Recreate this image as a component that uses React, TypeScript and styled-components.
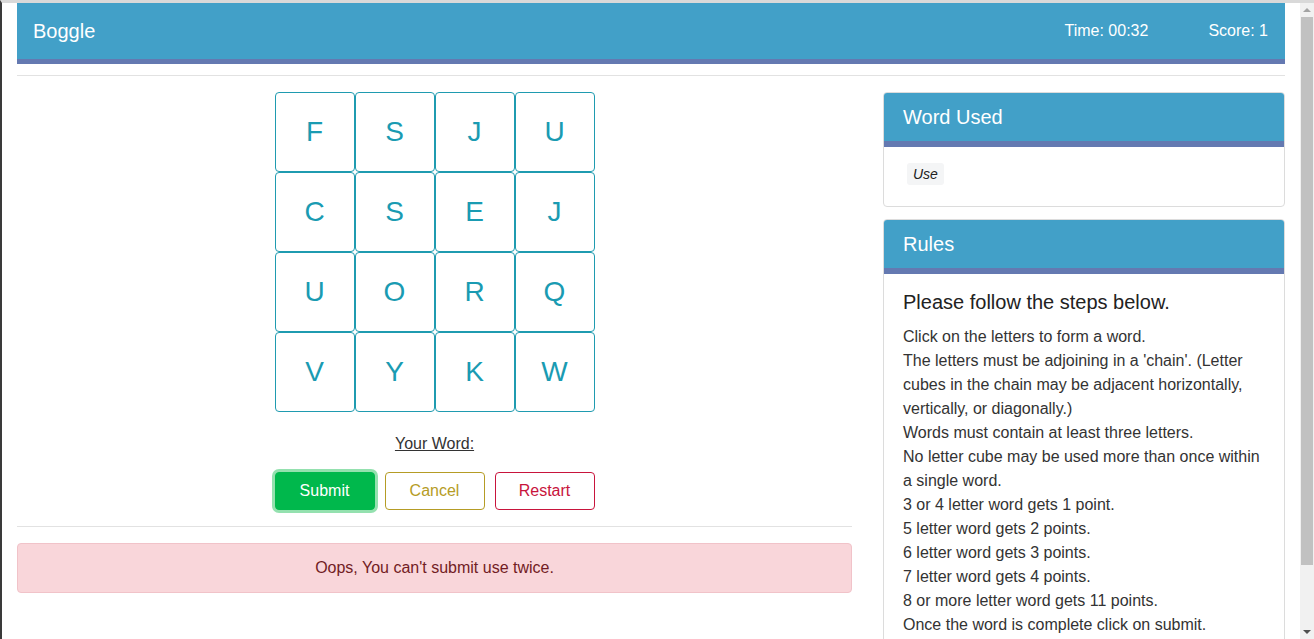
import React from "react";
import styled, { createGlobalStyle } from "styled-components";

const Global = createGlobalStyle`
  html, body { margin: 0; padding: 0; }
  body {
    font-family: "Liberation Sans", Arial, sans-serif;
    color: #333;
    background: #fff;
    border-top: 3px solid #d9d9d9;
    border-left: 2px solid #3a3a3a;
  }
  * { box-sizing: border-box; }
`;

const Page = styled.div`
  padding: 0 29px 40px 15px;
`;

const ScrollTrack = styled.div`
  position: fixed;
  top: 3px;
  right: 0;
  bottom: 0;
  width: 14px;
  background: #f1f1f1;
  display: flex;
  flex-direction: column;
  align-items: center;
`;

const ScrollArrow = styled.div<{ $down?: boolean }>`
  width: 0;
  height: 0;
  margin: 5px 0;
  border-left: 4px solid transparent;
  border-right: 4px solid transparent;
  ${(p) => (p.$down ? "border-top: 4px solid #505050;" : "border-bottom: 4px solid #a3a3a3;")}
`;

const ScrollThumb = styled.div`
  width: 12px;
  flex: 1;
  margin-bottom: 60px;
  background: #c1c1c1;
`;

const TopBar = styled.header`
  display: flex;
  align-items: center;
  justify-content: space-between;
  height: 61px;
  padding: 0 17px 0 16px;
  background: #42a0c8;
  border-bottom: 5px solid #6479b1;
  color: #fff;
`;

const Brand = styled.div`
  font-size: 20px;
`;

const Stats = styled.div`
  display: flex;
  gap: 60px;
  font-size: 16px;
`;

const Rule = styled.hr`
  border: 0;
  border-top: 1px solid #e2e2e2;
  margin: 11px 0 16px;
`;

const Columns = styled.div`
  display: grid;
  grid-template-columns: 835px 402px;
  gap: 31px;
  align-items: start;
`;

const GameColumn = styled.section`
  display: flex;
  flex-direction: column;
  align-items: center;
`;

const Board = styled.div`
  display: grid;
  grid-template-columns: repeat(4, 80px);
  grid-auto-rows: 80px;
`;

const Cell = styled.button`
  border: 1px solid #1f9bb0;
  border-radius: 4px;
  background: #fff;
  color: #1a9bb2;
  font-family: "Liberation Sans", Arial, sans-serif;
  font-size: 28px;
  display: flex;
  align-items: center;
  justify-content: center;
  padding: 0;
  cursor: pointer;
`;

const WordLabel = styled.div`
  margin-top: 23px;
  font-size: 16px;
  line-height: 18px;
  text-decoration: underline;
  color: #333;
`;

const Actions = styled.div`
  display: flex;
  gap: 10px;
  margin-top: 19px;
`;

const ActionButton = styled.button<{ $tone: string; $filled?: boolean }>`
  width: 100px;
  height: 38px;
  border-radius: 4px;
  font-family: "Liberation Sans", Arial, sans-serif;
  font-size: 16px;
  border: 1px solid ${(p) => p.$tone};
  background: ${(p) => (p.$filled ? p.$tone : "#fff")};
  color: ${(p) => (p.$filled ? "#fff" : p.$tone)};
  box-shadow: ${(p) => (p.$filled ? "0 0 0 3px rgba(60, 200, 110, 0.55)" : "none")};
  cursor: pointer;
`;

const FullRule = styled.hr`
  align-self: stretch;
  border: 0;
  border-top: 1px solid #e2e2e2;
  margin: 16px 0 16px;
`;

const Alert = styled.div`
  align-self: stretch;
  background: #f9d6da;
  border: 1px solid #f1c3c9;
  border-radius: 4px;
  color: #721c24;
  text-align: center;
  padding: 12px 20px;
  font-size: 16px;
  line-height: 24px;
`;

const Side = styled.aside`
  display: flex;
  flex-direction: column;
  gap: 12px;
`;

const Panel = styled.div`
  border: 1px solid #dcdcdc;
  border-radius: 4px;
  overflow: hidden;
`;

const PanelHead = styled.div`
  background: #42a0c8;
  border-bottom: 6px solid #6479b1;
  color: #fff;
  font-size: 20px;
  height: 54px;
  padding: 0 19px;
  display: flex;
  align-items: center;
`;

const WordsBody = styled.div`
  padding: 16px 20px 21px 23px;
  display: flex;
  gap: 6px;
`;

const Chip = styled.span`
  background: #f4f5f6;
  border-radius: 3px;
  font-style: italic;
  font-size: 14px;
  line-height: 22px;
  padding: 0 6px;
  color: #222;
`;

const RulesBody = styled.div`
  padding: 16px 19px 20px;
`;

const RulesTitle = styled.h5`
  margin: 0 0 11px;
  font-size: 20px;
  font-weight: normal;
  line-height: 24px;
  color: #222;
`;

const RuleLine = styled.div`
  font-size: 16px;
  line-height: 24px;
  color: #333;
`;

const letters = ["F", "S", "J", "U", "C", "S", "E", "J", "U", "O", "R", "Q", "V", "Y", "K", "W"];

const rules = [
  "Click on the letters to form a word.",
  "The letters must be adjoining in a 'chain'. (Letter cubes in the chain may be adjacent horizontally, vertically, or diagonally.)",
  "Words must contain at least three letters.",
  "No letter cube may be used more than once within a single word.",
  "3 or 4 letter word gets 1 point.",
  "5 letter word gets 2 points.",
  "6 letter word gets 3 points.",
  "7 letter word gets 4 points.",
  "8 or more letter word gets 11 points.",
  "Once the word is complete click on submit.",
];

export default function App() {
  return (
    <>
      <Global />
      <Page>
        <TopBar>
          <Brand>Boggle</Brand>
          <Stats>
            <span>Time: 00:32</span>
            <span>Score: 1</span>
          </Stats>
        </TopBar>
        <Rule />
        <Columns>
          <GameColumn>
            <Board>
              {letters.map((l, i) => (
                <Cell key={i}>{l}</Cell>
              ))}
            </Board>
            <WordLabel>Your Word:</WordLabel>
            <Actions>
              <ActionButton $tone="#00b84c" $filled>Submit</ActionButton>
              <ActionButton $tone="#b59c25">Cancel</ActionButton>
              <ActionButton $tone="#c8143c">Restart</ActionButton>
            </Actions>
            <FullRule />
            <Alert>Oops, You can't submit use twice.</Alert>
          </GameColumn>
          <Side>
            <Panel>
              <PanelHead>Word Used</PanelHead>
              <WordsBody>
                <Chip>Use</Chip>
              </WordsBody>
            </Panel>
            <Panel>
              <PanelHead>Rules</PanelHead>
              <RulesBody>
                <RulesTitle>Please follow the steps below.</RulesTitle>
                {rules.map((r, i) => (
                  <RuleLine key={i}>{r}</RuleLine>
                ))}
              </RulesBody>
            </Panel>
          </Side>
        </Columns>
      </Page>
      <ScrollTrack>
        <ScrollArrow />
        <ScrollThumb />
        <ScrollArrow $down />
      </ScrollTrack>
    </>
  );
}
